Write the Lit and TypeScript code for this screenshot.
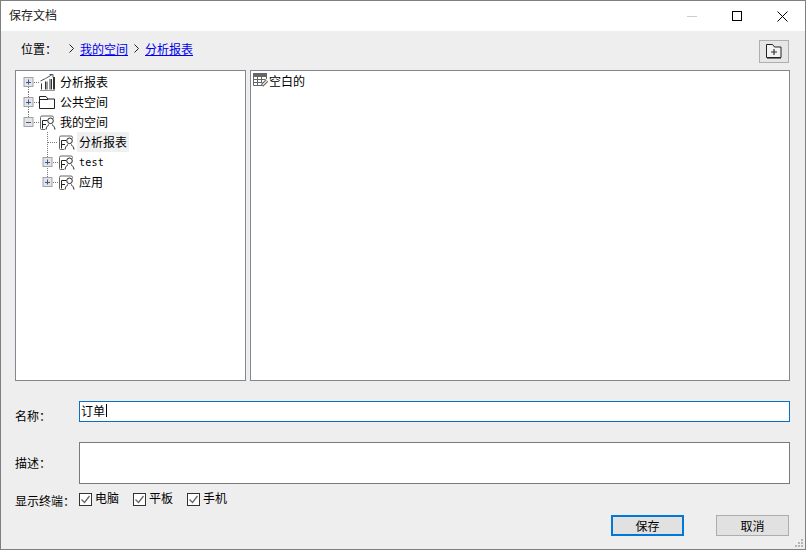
import { LitElement, html, css, svg } from "lit";
import { customElement } from "lit/decorators.js";

const plusBox = (cx: number, open: boolean) => svg`
  <rect x=${cx - 4.5} y="5.5" width="9" height="9" fill="#e4e4e4" stroke="#a3a3a3"/>
  <path d="M${cx - 2} 10h5" stroke="#3b57a0" fill="none" transform="translate(-.5 .5)"/>
  ${open ? "" : svg`<path d="M${cx} 7.500v5" stroke="#3b57a0" fill="none"/>`}`;

const DOT = "1 1";

const guideL0 = (open: boolean, up: boolean, down: boolean) => html`<svg class="guide" width="23" height="20" viewBox="0 0 23 20">
  ${up ? svg`<path d="M12.5 0v6" stroke="#777" stroke-dasharray=${DOT}/>` : ""}
  ${down ? svg`<path d="M12.5 15v5" stroke="#777" stroke-dasharray=${DOT}/>` : ""}
  <path d="M18 10.5h5" stroke="#777" stroke-dasharray=${DOT}/>
  ${plusBox(12.5, open)}
</svg>`;

const guideL1 = (box: boolean, down: boolean) => html`<svg class="guide" width="42" height="20" viewBox="0 0 42 20">
  <path d=${down ? "M31.5 0v20" : "M31.5 0v6"} stroke="#777" stroke-dasharray=${DOT}/>
  <path d="M${box ? 37 : 32} 10.5h${box ? 5 : 10}" stroke="#777" stroke-dasharray=${DOT}/>
  ${box ? plusBox(31.5, false) : ""}
</svg>`;

const personIcon = html`<svg class="icon" width="17" height="17" viewBox="0 0 17 17" fill="none">
  <path d="M6 15.500H2.500a1 1 0 0 1-1-1V3.500a1.500 1.500 0 0 1 1.500-1.500H13a1.500 1.500 0 0 1 1.500 1.500V4.500" stroke="#666"/>
  <path d="M3.500 14.500V6.500H8M3.500 10.500H7" stroke="#222"/>
  <circle cx="11.500" cy="6.800" r="2.800" stroke="#222"/>
  <path d="M7 15.500c.3-2.500 1.800-4 3-5M16 15.500c-.3-2.500-1.800-4-3-5" stroke="#222"/>
</svg>`;

const chartIcon = html`<svg class="icon" width="17" height="17" viewBox="0 0 17 17" fill="none">
  <path d="M1.500 7l5-2.500 7-4M10.500.5h3.500v3" stroke="#555"/>
  <path d="M2.500 9.500v6M6.500 7.500v8M8 7.500v8M11 5v10.500M12.500 5v10.500M14.500 3v12.500M15.500 3v12.500" stroke="#333"/>
  <path d="M1 16.500h15" stroke="#999"/>
</svg>`;

const folderIcon = html`<svg class="icon" width="17" height="17" viewBox="0 0 17 17" fill="none" stroke="#222">
  <path d="M.5 14.500V2.500h6.500l2 2.500h6.500v9.500zM.5 5.500H9"/>
</svg>`;

const gridIcon = html`<svg class="grid" width="17" height="14" viewBox="0 0 17 14" fill="none">
  <rect x="1" y="0" width="14" height="4" fill="#666"/>
  <path d="M1.500 4v8.500h9M1.500 6.500h12M1.500 9.500h9M5.500 4v8.500M9.500 4v6M14.500 4v2" stroke="#666"/>
  <path d="M10 12.500l5-5" stroke="#666" stroke-width="3.400"/>
  <path d="M10.500 12l4.500-4.500" stroke="#e8e8e8" stroke-width="1.200"/>
</svg>`;

const check = html`<svg class="check" width="13" height="13" viewBox="0 0 13 13" fill="none">
  <rect x=".5" y=".5" width="12" height="12" fill="#fff" stroke="#333"/>
  <path d="M2.500 6.500l3 3 5-6.500" stroke="#666" stroke-width="1.300"/>
</svg>`;

@customElement("app-root")
export class AppRoot extends LitElement {
  static styles = css`
    :host {
      display: block;
      width: 806px;
      height: 550px;
      font-family: "Noto Sans CJK SC", "Liberation Sans", sans-serif;
      font-size: 12px;
      color: #000;
    }
    .win {
      box-sizing: border-box;
      width: 806px;
      height: 550px;
      border: 1px solid #7f7f7f;
      background: #eeeeee;
      display: flex;
      flex-direction: column;
      position: relative;
    }
    .title {
      height: 30px;
      background: #fff;
      display: flex;
      align-items: center;
      padding-left: 8px;
      font-size: 12px;
    }
    .title .t { flex: 1; color: #222; padding-bottom: 3px; }
    .wbtn { width: 45px; height: 30px; display: flex; align-items: center; justify-content: center; }
    .wbtn.max { margin-right: 1px; }
    .body {
      flex: 1;
      display: flex;
      flex-direction: column;
      padding: 0 15px 0 14px;
      min-height: 0;
    }
    .loc {
      height: 39px;
      display: flex;
      align-items: center;
    }
    .loc .lbl { width: 46px; margin-left: 6px; padding-bottom: 4px; }
    .crumb { display: flex; align-items: center; gap: 5px; flex: 1; padding: 0 0 4px 2px; }
    .crumb .sep2 { margin-left: 1px; }
    .crumb a { color: #0000ee; text-decoration: underline; }
    .newf {
      box-sizing: border-box;
      width: 30px;
      height: 23px;
      border: 1px solid #aeaeae;
      background: #e6e6e6;
      display: flex;
      align-items: center;
      justify-content: center;
      margin-right: 1px;
      margin-top: 1px;
    }
    .panes { display: flex; gap: 4px; height: 311px; }
    .pane {
      box-sizing: border-box;
      background: #fff;
      border: 1px solid #828790;
      height: 311px;
    }
    .left { width: 231px; padding-top: 1px; }
    .right { width: 540px; padding: 0 0 0 1px; }
    .row { height: 20px; display: flex; align-items: center; white-space: nowrap; }
    .guide { flex: none; }
    .icon { flex: none; }
    .row .lab { margin-left: 3px; padding: 0 2px 0 1px; height: 20px; line-height: 20px; }
    .row.c .lab { margin-left: 2px; padding: 0 2px; }
    .row.sel .lab { background: #f0f0f0; }
    .mono { font-family: "DejaVu Sans Mono", "Liberation Mono", monospace; font-size: 10px; letter-spacing: .2px; padding-top: 1px !important; height: 19px !important; }
    .blank { display: flex; align-items: center; height: 18px; }
    .grid { flex: none; }
    .field { display: flex; align-items: center; }
    .flabel { width: 64px; }
    .input {
      box-sizing: border-box;
      width: 711px;
      background: #fff;
      line-height: 16px;
      padding-left: 1px;
    }
    .name { margin-top: 20px; height: 21px; }
    .name .input { height: 21px; border: 1px solid #0a6fc2; display: flex; align-items: center; padding-bottom: 2px; }
    .name .flabel { padding-top: 8px; }
    .caret { display: inline-block; width: 1px; height: 13px; background: #000; margin-left: 1px; }
    .desc { margin-top: 20px; height: 42px; }
    .desc .input { height: 42px; border: 1px solid #7a7a7a; }
    .desc .flabel { padding-bottom: 1px; }
    .term { margin-top: 5px; height: 20px; }
    .checks { display: flex; gap: 14px; }
    .ck { display: flex; align-items: center; gap: 3px; margin-top: -3px; }
    .term .flabel { padding-top: 2px; }
    .check { flex: none; margin-top: 3px; }
    .acts { display: flex; justify-content: flex-end; gap: 32px; margin-top: 6px; padding-right: 1px; }
    .btn {
      box-sizing: border-box;
      width: 73px;
      height: 21px;
      background: #e1e1e1;
      border: 1px solid #adadad;
      display: flex;
      align-items: center;
      justify-content: center;
    }
    .btn.def { border: 2px solid #0078d7; }
    .grip { position: absolute; right: 1px; bottom: 1px; }
  `;

  private rows = [
    { k: 0, open: false, up: false, down: true, icon: chartIcon, t: "分析报表" },
    { k: 0, open: false, up: true, down: true, icon: folderIcon, t: "公共空间" },
    { k: 0, open: true, up: true, down: false, icon: personIcon, t: "我的空间" },
    { k: 1, box: false, down: true, icon: personIcon, t: "分析报表", sel: true },
    { k: 1, box: true, down: true, icon: personIcon, t: "test", mono: true },
    { k: 1, box: true, down: false, icon: personIcon, t: "应用" },
  ] as any[];

  render() {
    return html`<div class="win">
      <div class="title">
        <span class="t">保存文档</span>
        <div class="wbtn"><svg width="10" height="1"><rect width="10" height="1" fill="#ccc"/></svg></div>
        <div class="wbtn max"><svg width="10" height="10" fill="none"><rect x=".5" y=".5" width="9" height="9" stroke="#000"/></svg></div>
        <div class="wbtn"><svg width="11" height="11" fill="none"><path d="M.5.500l10 10M10.500.500l-10 10" stroke="#000"/></svg></div>
      </div>
      <div class="body">
        <div class="loc">
          <span class="lbl">位置：</span>
          <div class="crumb">
            <svg width="6" height="9" fill="none"><path d="M.5.500l4 4-4 4" stroke="#222"/></svg>
            <a>我的空间</a>
            <svg class="sep2" width="6" height="9" fill="none"><path d="M.5.500l4 4-4 4" stroke="#222"/></svg>
            <a>分析报表</a>
          </div>
          <div class="newf">
            <svg width="16" height="15" viewBox="0 0 16 15" fill="none">
              <path d="M.5 13.500V.5h6l2 2.500h6.500v10.500z" fill="#f3f3f3" stroke="#222"/>
              <path d="M1 14.500h14" stroke="#777"/>
              <path d="M8 5v6M5 8h6" stroke="#333" stroke-width="1.200"/>
            </svg>
          </div>
        </div>
        <div class="panes">
          <div class="pane left">
            ${this.rows.map((r) =>
              r.k === 0
                ? html`<div class="row">${guideL0(r.open, r.up, r.down)}${r.icon}<span class="lab">${r.t}</span></div>`
                : html`<div class="row c ${r.sel ? "sel" : ""}">${guideL1(r.box, r.down)}${r.icon}<span class="lab ${r.mono ? "mono" : ""}">${r.t}</span></div>`
            )}
          </div>
          <div class="pane right">
            <div class="blank">${gridIcon}<span>空白的</span></div>
          </div>
        </div>
        <div class="field name">
          <span class="flabel">名称：</span>
          <div class="input"><span>订单</span><span class="caret"></span></div>
        </div>
        <div class="field desc">
          <span class="flabel">描述：</span>
          <div class="input"></div>
        </div>
        <div class="field term">
          <span class="flabel">显示终端：</span>
          <div class="checks">
            <label class="ck">${check}<span>电脑</span></label>
            <label class="ck">${check}<span>平板</span></label>
            <label class="ck">${check}<span>手机</span></label>
          </div>
        </div>
        <div class="acts">
          <div class="btn def">保存</div>
          <div class="btn">取消</div>
        </div>
      </div>
      <svg class="grip" width="10" height="10" fill="#b5b5b5">
        <rect x="7" y="1" width="2" height="2"/><rect x="4" y="4" width="2" height="2"/><rect x="7" y="4" width="2" height="2"/>
        <rect x="1" y="7" width="2" height="2"/><rect x="4" y="7" width="2" height="2"/><rect x="7" y="7" width="2" height="2"/>
      </svg>
    </div>`;
  }
}
